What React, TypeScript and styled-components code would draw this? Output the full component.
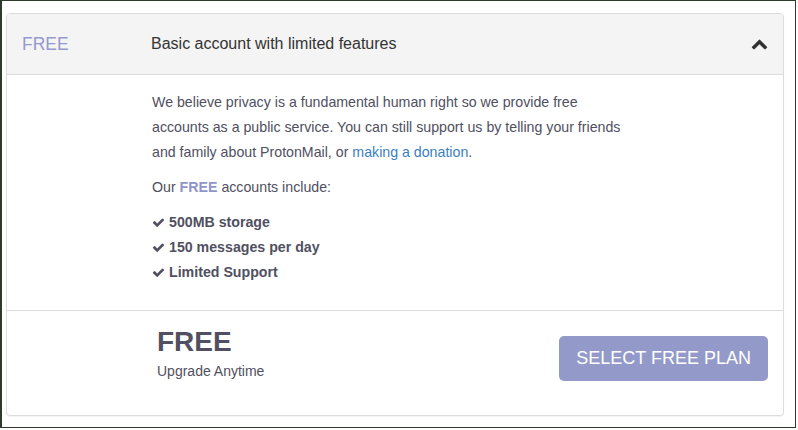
import React from "react";
import styled, { createGlobalStyle } from "styled-components";

const Global = createGlobalStyle`
  html, body { margin: 0; padding: 0; background: #fff; }
  body { font-family: "Liberation Sans", Arial, sans-serif; color: #505061; }
  * { box-sizing: border-box; }
`;

const Frame = styled.div`
  width: 796px;
  height: 428px;
  border: 1px solid #2e3a2e;
  border-left-width: 2px;
  padding: 12px 11px 0 4px;
  background: #fff;
`;

const Card = styled.section`
  width: 778px;
  border: 1px solid #dcdcdc;
  border-radius: 4px;
  background: #fff;
  box-shadow: 0 1px 1px rgba(0, 0, 0, 0.05);
  overflow: hidden;
`;

const Header = styled.header`
  display: flex;
  align-items: center;
  height: 61px;
  padding: 0 16px 0 15px;
  background: #f4f4f4;
  border-bottom: 1px solid #dcdcdc;
`;

const PlanLabel = styled.div`
  width: 129px;
  font-size: 17.5px;
  color: #9599cd;
`;

const Title = styled.div`
  flex: 1;
  font-size: 16px;
  color: #333;
`;

const Chevron = styled.svg`
  width: 17px;
  height: 17px;
  fill: #333;
  margin-top: -2px;
  margin-right: -1px;
`;

const Body = styled.div`
  padding: 15px 16px 25px 145px;
  border-bottom: 1px solid #dcdcdc;
`;

const Para = styled.p`
  margin: 0 0 10px;
  width: 478px;
  font-size: 14.2px;
  line-height: 25px;
`;

const Link = styled.a`
  color: #3a7fbf;
  text-decoration: none;
`;

const Accent = styled.strong`
  color: #8f95c9;
`;

const FeatureList = styled.ul`
  list-style: none;
  margin: 0;
  padding: 0;
`;

const Feature = styled.li`
  display: flex;
  align-items: center;
  gap: 4px;
  font-size: 14.2px;
  line-height: 25px;
  font-weight: bold;
`;

const Check = styled.svg`
  width: 13px;
  height: 13px;
  fill: #505061;
`;

const Footer = styled.footer`
  display: flex;
  align-items: flex-start;
  justify-content: space-between;
  padding: 15px 15px 34px 150px;
`;

const Price = styled.div`
  display: flex;
  flex-direction: column;
`;

const PriceValue = styled.div`
  font-size: 28px;
  line-height: 32px;
  font-weight: bold;
  color: #505061;
`;

const PriceNote = styled.div`
  font-size: 14px;
  line-height: 20px;
  margin-top: 3px;
`;

const SelectButton = styled.button`
  height: 45px;
  padding: 0 17px;
  margin-top: 10px;
  border: none;
  border-radius: 5px;
  background: #939ac9;
  color: #fff;
  font-family: "Liberation Sans", Arial, sans-serif;
  font-size: 18px;
  cursor: pointer;
`;

const CHECK_PATH =
  "M1671 566q0 40-28 68l-724 724-136 136q-28 28-68 28t-68-28l-136-136-362-362q-28-28-28-68t28-68l136-136q28-28 68-28t68 28l294 295 656-657q28-28 68-28t68 28l136 136q28 28 28 68z";
const CHEVRON_PATH =
  "M1683 1331l-166 165q-19 19-45 19t-45-19l-531-531-531 531q-19 19-45 19t-45-19l-166-165q-19-19-19-45.5t19-45.5l742-741q19-19 45-19t45 19l742 741q19 19 19 45.5t-19 45.5z";

const features = ["500MB storage", "150 messages per day", "Limited Support"];

export default function App() {
  return (
    <>
      <Global />
      <Frame>
        <Card>
          <Header>
            <PlanLabel>FREE</PlanLabel>
            <Title>Basic account with limited features</Title>
            <Chevron viewBox="0 0 1792 1792">
              <path d={CHEVRON_PATH} />
            </Chevron>
          </Header>
          <Body>
            <Para>
              We believe privacy is a fundamental human right so we provide free
              accounts as a public service. You can still support us by telling
              your friends and family about ProtonMail, or{" "}
              <Link href="#">making a donation</Link>.
            </Para>
            <Para>
              Our <Accent>FREE</Accent> accounts include:
            </Para>
            <FeatureList>
              {features.map((f) => (
                <Feature key={f}>
                  <Check viewBox="0 0 1792 1792">
                    <path d={CHECK_PATH} />
                  </Check>
                  {f}
                </Feature>
              ))}
            </FeatureList>
          </Body>
          <Footer>
            <Price>
              <PriceValue>FREE</PriceValue>
              <PriceNote>Upgrade Anytime</PriceNote>
            </Price>
            <SelectButton>SELECT FREE PLAN</SelectButton>
          </Footer>
        </Card>
      </Frame>
    </>
  );
}
